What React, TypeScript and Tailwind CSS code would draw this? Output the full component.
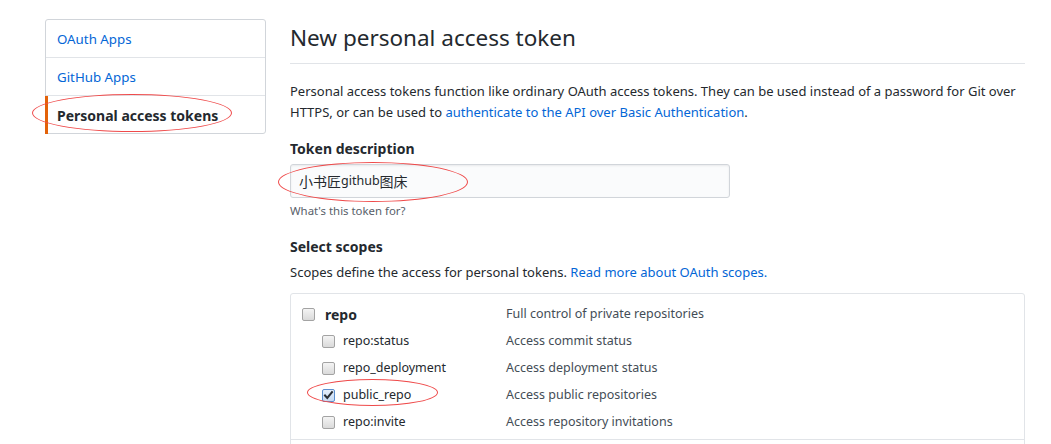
import React from "react";

const FONT = {
  fontFamily:
    '"Segoe UI", "Noto Sans", "Open Sans", "Noto Sans CJK SC", sans-serif',
};

function Checkbox({ checked = false }: { checked?: boolean }) {
  if (checked) {
    return (
      <span className="relative inline-block w-[13px] h-[13px] shrink-0 rounded-[2px] border border-[#5b8fcf] bg-gradient-to-b from-[#e4eefb] to-[#c7dbf3]">
        <svg
          viewBox="0 0 13 13"
          className="absolute left-[-1px] top-[-1px] w-[13px] h-[13px]"
        >
          <path
            d="M3 6.5 L5.3 9 L10 3.2"
            fill="none"
            stroke="#2a2f36"
            strokeWidth="2"
            strokeLinecap="square"
          />
        </svg>
      </span>
    );
  }
  return (
    <span className="inline-block w-[13px] h-[13px] shrink-0 rounded-[2px] border border-[#a3a3a3] bg-gradient-to-b from-[#f4f4f4] to-[#dadada]" />
  );
}

function ScopeRow({
  name,
  desc,
  top = false,
  checked = false,
}: {
  name: string;
  desc: string;
  top?: boolean;
  checked?: boolean;
}) {
  return (
    <div className="flex items-center h-[27px]">
      <div
        className={
          top
            ? "flex items-center w-[215px] pl-[11px] gap-[10px]"
            : "flex items-center w-[215px] pl-[31px] gap-[8px]"
        }
      >
        <Checkbox checked={checked} />
        <span
          className={
            top
              ? "text-[14px] font-bold text-[#24292e]"
              : "text-[12.5px] text-[#24292e]"
          }
        >
          {name}
        </span>
      </div>
      <span className="text-[12.5px] text-[#444d56]">{desc}</span>
    </div>
  );
}

export default function App() {
  return (
    <div
      className="relative w-[1051px] h-[444px] overflow-hidden bg-white text-[#24292e]"
      style={FONT}
    >
      <div className="flex pt-[19px] pl-[45px]">
        {/* Sidebar */}
        <nav className="w-[221px] self-start border border-[#d1d5da] rounded-[3px] text-[13.3px]">
          <div className="flex items-center h-[37px] pt-[2px] pl-[11px] text-[#0366d6]">
            OAuth Apps
          </div>
          <div className="flex items-center h-[38px] pt-[2px] pl-[11px] border-t border-[#e1e4e8] text-[#0366d6]">
            GitHub Apps
          </div>
          <div className="relative flex items-center h-[38px] pt-[1px] pl-[11px] border-t border-[#e1e4e8] text-[14px] font-bold text-[#24292e]">
            <span className="absolute left-[-1px] top-0 bottom-[-1px] w-[3px] bg-[#e36209]" />
            Personal access tokens
          </div>
        </nav>

        {/* Main */}
        <main className="ml-[24px] w-[735px]">
          <h2 className="text-[22.5px] leading-[38px] font-normal pb-[6px] border-b border-[#e1e4e8]">
            New personal access token
          </h2>
          <p className="mt-[17px] text-[13px] leading-[21px]">
            Personal access tokens function like ordinary OAuth access tokens.
            They can be used instead of a password for Git over HTTPS, or can be
            used to{" "}
            <a className="text-[#0366d6]">
              authenticate to the API over Basic Authentication
            </a>
            .
          </p>

          <div className="mt-[15px] text-[14px] leading-[21px] font-bold">
            Token description
          </div>
          <div className="mt-[5px] w-[440px] h-[34px] flex items-center px-[8px] border border-[#d1d5da] rounded-[3px] bg-[#fafbfc] shadow-[inset_0_1px_2px_rgba(27,31,35,0.075)] text-[14px] text-[#24292e]">
            小书匠<span className="text-[12.5px]">github</span>图床
          </div>
          <div className="mt-[4px] text-[11.4px] leading-[18px] text-[#586069]">
            What&apos;s this token for?
          </div>

          <div className="mt-[16px] text-[14px] leading-[21px] font-bold">
            Select scopes
          </div>
          <p className="mt-[5px] text-[13px] leading-[21px]">
            Scopes define the access for personal tokens.{" "}
            <a className="text-[#0366d6]">Read more about OAuth scopes.</a>
          </p>

          <div className="mt-[10px] border border-[#e1e4e8] rounded-[3px]">
            <div className="pt-[7px] pb-[3px]">
              <ScopeRow top name="repo" desc="Full control of private repositories" />
              <ScopeRow name="repo:status" desc="Access commit status" />
              <ScopeRow name="repo_deployment" desc="Access deployment status" />
              <ScopeRow checked name="public_repo" desc="Access public repositories" />
              <ScopeRow name="repo:invite" desc="Access repository invitations" />
            </div>
            <div className="border-t border-[#e1e4e8] h-[40px]" />
          </div>
        </main>
      </div>

      {/* Red annotation ellipses */}
      <span className="absolute left-[32px] top-[94px] w-[200px] h-[38px] rounded-[50%] border border-[#ef4a4a]" />
      <span className="absolute left-[278px] top-[162px] w-[190px] h-[40px] rounded-[50%] border border-[#ef4a4a]" />
      <span className="absolute left-[307px] top-[379px] w-[131px] h-[27px] rounded-[50%] border border-[#ef4a4a]" />
    </div>
  );
}
